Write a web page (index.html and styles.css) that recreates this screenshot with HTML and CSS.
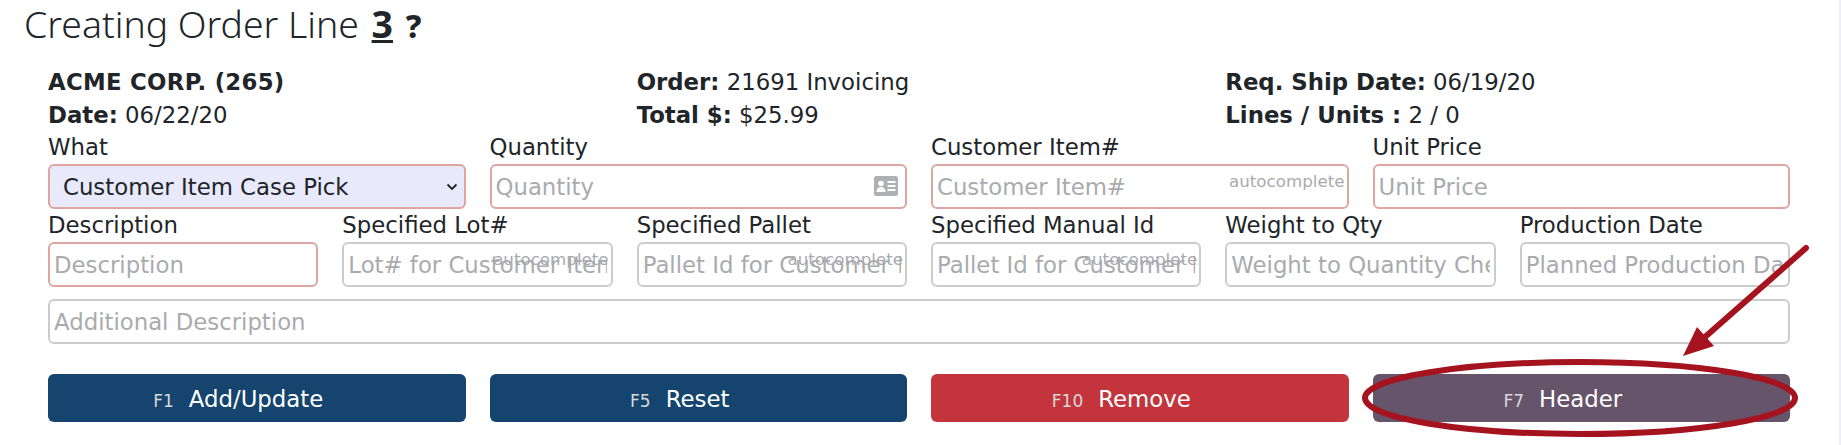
FILE: index.html
```html
<!DOCTYPE html>
<html lang="en">
<head>
<meta charset="utf-8">
<title>Creating Order Line</title>
<link rel="stylesheet" href="styles.css">
</head>
<body>
<h1 class="title">Creating Order Line <strong class="num">3</strong> <span class="help">?</span></h1>
<div class="form">
  <div class="info">
    <div><p><b class="wide-b">ACME CORP. (265)</b></p><p><b>Date:</b> 06/22/20</p></div>
    <div><p><b>Order:</b> 21691 Invoicing</p><p><b>Total $:</b> $25.99</p></div>
    <div><p><b>Req. Ship Date:</b> 06/19/20</p><p><b>Lines / Units :</b> 2 / 0</p></div>
  </div>
  <div class="row four">
    <div class="field"><label>What</label>
      <div class="box req sel"><span>Customer Item Case Pick</span>
        <svg class="chev" viewBox="0 0 12 8"><path d="M1.500 1.500 6 6l4.500-4.500" fill="none" stroke="#222" stroke-width="1.800"/></svg>
      </div></div>
    <div class="field"><label>Quantity</label>
      <div class="box req"><span class="ph">Quantity</span>
        <svg class="card" viewBox="0 0 24 20"><rect width="24" height="20" rx="2.500" fill="#aeb0b3"/><circle cx="7" cy="7.500" r="2.800" fill="#fff"/><path d="M2.500 16c0-3.400 2-5 4.500-5s4.500 1.600 4.500 5z" fill="#fff"/><path d="M13.500 5h8v2h-8zM13.500 9h8v2h-8zM13.500 13h8v2h-8z" fill="#fff"/></svg>
      </div></div>
    <div class="field"><label>Customer Item#</label>
      <div class="box req"><span class="ph">Customer Item#</span><span class="auto">autocomplete</span></div></div>
    <div class="field"><label>Unit Price</label>
      <div class="box req"><span class="ph">Unit Price</span></div></div>
  </div>
  <div class="row six">
    <div class="field"><label>Description</label>
      <div class="box req"><span class="ph">Description</span></div></div>
    <div class="field"><label>Specified Lot#</label>
      <div class="box"><span class="ph">Lot# for Customer Item</span><span class="auto">autocomplete</span></div></div>
    <div class="field"><label>Specified Pallet</label>
      <div class="box"><span class="ph">Pallet Id for Customer Item</span><span class="auto">autocomplete</span></div></div>
    <div class="field"><label>Specified Manual Id</label>
      <div class="box"><span class="ph">Pallet Id for Customer Item</span><span class="auto">autocomplete</span></div></div>
    <div class="field"><label>Weight to Qty</label>
      <div class="box"><span class="ph">Weight to Quantity Check</span></div></div>
    <div class="field"><label>Production Date</label>
      <div class="box"><span class="ph">Planned Production Date</span></div></div>
  </div>
  <div class="box wide"><span class="ph">Additional Description</span></div>
  <div class="row four buttons">
    <div class="btn blue"><small>F1</small>Add/Update</div>
    <div class="btn blue"><small>F5</small>Reset</div>
    <div class="btn red"><small>F10</small>Remove</div>
    <div class="btn plum"><small>F7</small>Header</div>
  </div>
</div>
<svg class="mark" viewBox="0 0 1841 445" aria-hidden="true">
  <ellipse cx="1580" cy="398" rx="215" ry="36" fill="none" stroke="#a5141e" stroke-width="6"/>
  <path d="M1806 248 1705 337" fill="none" stroke="#a5141e" stroke-width="6" stroke-linecap="round"/>
  <path d="M1683 356 1697 327 1714 346z" fill="#a5141e"/>
</svg>
</body>
</html>
```
FILE: styles.css
```css
* { box-sizing: border-box; }
body {
  margin: 0;
  height: 445px;
  overflow: hidden;
  position: relative;
  background: #fff;
  color: #212529;
  font-family: "DejaVu Sans", sans-serif;
  font-size: 22.8px;
  border-right: 2px solid #eeeefa;
}
p { margin: 0; }
.title {
  margin: 0;
  padding: 0 0 0 24px;
  height: 65px;
  line-height: 48px;
  font-family: "Noto Sans", sans-serif;
  font-size: 37.4px;
  font-weight: 300;
}
.num { font-weight: 700; text-decoration: underline; margin-left: 3px; }
.help { font-size: 32px; font-weight: 800; margin-left: 3px; }
.form {
  padding: 0 49px 0 48px;
  display: flex;
  flex-direction: column;
}
.info {
  display: grid;
  grid-template-columns: repeat(3, 1fr);
  column-gap: 24px;
  line-height: 33px;
  padding-top: 1px;
  margin-bottom: -1px;
}
.info b { font-weight: 700; }
.info .wide-b { letter-spacing: 0.3px; }
.row { display: grid; column-gap: 24px; }
.four { grid-template-columns: repeat(4, 1fr); }
.six { grid-template-columns: repeat(6, 1fr); }
.field { display: flex; flex-direction: column; min-width: 0; }
.field label { line-height: 33px; height: 33px; white-space: nowrap; }
.box {
  position: relative;
  height: 45px;
  border: 2px solid #ccc;
  border-radius: 6px;
  padding: 0 4px;
  display: flex;
  align-items: center;
  overflow: hidden;
  white-space: nowrap;
  background: #fff;
}
.box.req { border-color: #dfa5a0; }
.sel { background: #e8eafb; padding-left: 13px; justify-content: space-between; padding-right: 6px; }
.ph { color: #a9abae; flex: 1; min-width: 0; overflow: hidden; }
.auto {
  position: absolute;
  right: 2px;
  top: 5px;
  color: #a9abae;
  font-size: 16.700px;
  line-height: 20px;
}
.chev { width: 12px; height: 8px; flex: none; }
.card { position: absolute; right: 7px; top: 10px; width: 24px; height: 20px; }
.wide { margin-top: 12px; }
.buttons { margin-top: 30px; }
.btn {
  height: 48px;
  border-radius: 6px;
  color: #fff;
  display: flex;
  align-items: center;
  justify-content: center;
  padding: 1px 37px 0 0;
}
.btn small { font-size: 17px; margin-right: 15px; color: #d9d9d9; padding-top: 4px; }
.blue { background: #15456e; }
.red { background: #c4343c; }
.plum { background: #66546b; }
.mark {
  position: absolute;
  left: 0;
  top: 0;
  width: 1841px;
  height: 445px;
  pointer-events: none;
}
```
